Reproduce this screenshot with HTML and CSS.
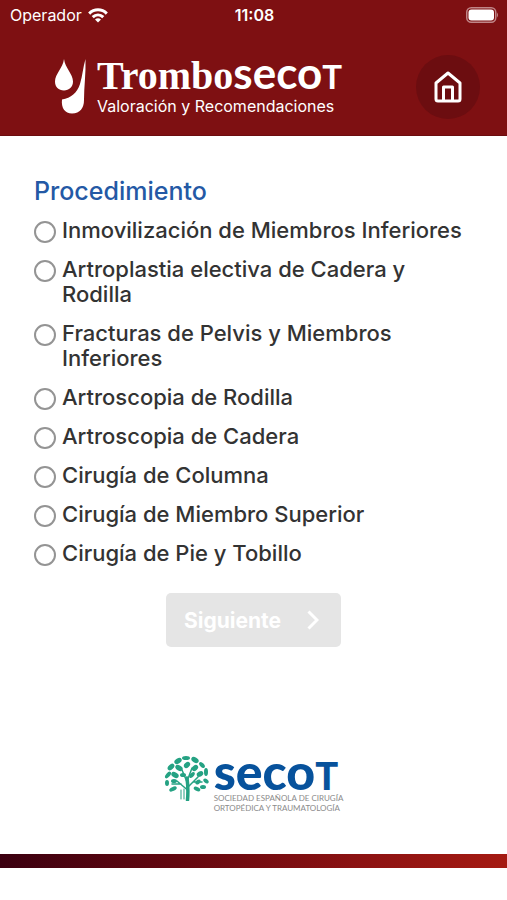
FILE: index.html
```
<!DOCTYPE html>
<html lang="es">
<head>
  <meta charset="UTF-8">
  <meta name="viewport" content="width=device-width, initial-scale=1.0">
  <title>TromboSecot</title>
  <link rel="stylesheet" href="styles.css">
</head>
<body>

<header>
  <div class="status-bar">
    <div class="carrier">
      <span>Operador</span>
      <svg width="20" height="15" viewBox="0 0 20 15" fill="none" stroke="#fff" stroke-width="3">
        <path d="M1.2 5.6C6.2.6 13.8.6 18.8 5.6"/>
        <path d="M4.7 9.2C7.8 6.2 12.2 6.2 15.3 9.2"/>
        <path d="M10 14.6 7 11.6Q10 9 13 11.6Z" fill="#fff" stroke="none"/>
      </svg>
    </div>
    <span class="clock">11:08</span>
    <svg class="battery" width="33" height="16" viewBox="0 0 33 16">
      <rect x=".75" y=".75" width="29" height="14.5" rx="4.5" fill="none" stroke="#c08587" stroke-width="1.5"/>
      <rect x="2.5" y="2.5" width="25.5" height="11" rx="3" fill="#fff"/>
      <path d="M31 5.5Q33 8 31 10.5Z" fill="#c08587"/>
    </svg>
  </div>

  <div class="header-content">
    <div class="brand">
      <svg width="32" height="56" viewBox="0 0 32 56" fill="#fff">
        <path d="M9 0C10 9 18 15 18 22.500C18 28 14 31.500 9 31.500C3.500 31.500 0 28 0 22.500C0 15 8 9 9 0Z"/>
        <path d="M30.500 0C28 8 27.500 17 25 25C22 34 16 39 7 40.500C6 49 10 54.500 17 54.500C25 54.500 29 49 29 41C29 28 31 14 30.500 0Z"/>
      </svg>
      <div>
        <h1><span class="trombo">Trombo</span><span class="wordmark">seco<span>T</span></span></h1>
        <p>Valoración y Recomendaciones</p>
      </div>
    </div>
    <a class="home" href="#" aria-label="Inicio">
      <svg width="28" height="32" viewBox="0 0 28 32" fill="none" stroke="#fff" stroke-width="3" stroke-linejoin="round">
        <path d="M2 12 14 2 26 12V28Q26 30 24 30H4Q2 30 2 28Z"/>
        <path d="M9.500 30V16H18.500V30"/>
      </svg>
    </a>
  </div>
</header>

<main>
  <form id="procedure-form">
    <fieldset>
      <legend>Procedimiento</legend>
      <label><input type="radio" name="procedimiento" value="1"><span>Inmovilización de Miembros Inferiores</span></label>
      <label><input type="radio" name="procedimiento" value="2"><span>Artroplastia electiva de Cadera y Rodilla</span></label>
      <label><input type="radio" name="procedimiento" value="3"><span>Fracturas de Pelvis y Miembros Inferiores</span></label>
      <label><input type="radio" name="procedimiento" value="4"><span>Artroscopia de Rodilla</span></label>
      <label><input type="radio" name="procedimiento" value="5"><span>Artroscopia de Cadera</span></label>
      <label><input type="radio" name="procedimiento" value="6"><span>Cirugía de Columna</span></label>
      <label><input type="radio" name="procedimiento" value="7"><span>Cirugía de Miembro Superior</span></label>
      <label><input type="radio" name="procedimiento" value="8"><span>Cirugía de Pie y Tobillo</span></label>
    </fieldset>
    <button type="submit" disabled>
      Siguiente
      <svg width="12" height="20" viewBox="0 0 12 20" fill="none" stroke="#fff" stroke-width="3"><path d="M1.500 1.500 10 10 1.500 18.500"/></svg>
    </button>
  </form>
</main>

<footer>
  <div class="secot">
    <svg width="46" height="46" viewBox="0 0 46 46" fill="#25a283">
      <g fill="none" stroke="#25a283" stroke-linecap="round">
        <path d="M23.500 45Q24.500 34 23 23" stroke-width="3.500"/>
        <path d="M23.500 35 13 26M24 32 34 22M23 27 18 15M23.500 25 28 13M17 29H8M29 27H38" stroke-width="1.500"/>
        <path d="M17 35V44M20 34V44" stroke-width="1"/>
      </g>
      <g>
        <ellipse cx="22" cy="3" rx="4" ry="2"/><ellipse cx="14" cy="6" rx="4" ry="2.500" transform="rotate(-30 14 6)"/>
        <ellipse cx="31" cy="5" rx="4" ry="2.500" transform="rotate(30 31 5)"/><ellipse cx="38" cy="10" rx="3.500" ry="2" transform="rotate(45 38 10)"/>
        <ellipse cx="7" cy="12" rx="4" ry="2.500" transform="rotate(-45 7 12)"/><ellipse cx="15" cy="13" rx="4" ry="2.500" transform="rotate(30 15 13)"/>
        <ellipse cx="23" cy="10" rx="3.500" ry="2.500" transform="rotate(-40 23 10)"/><ellipse cx="31" cy="13" rx="3.500" ry="2.500" transform="rotate(-40 31 13)"/>
        <ellipse cx="42" cy="17" rx="2" ry="4"/><ellipse cx="4" cy="20" rx="4" ry="2" transform="rotate(-50 4 20)"/>
        <ellipse cx="11" cy="20" rx="4" ry="2.500" transform="rotate(30 11 20)"/><ellipse cx="19" cy="20" rx="3" ry="2"/>
        <ellipse cx="28" cy="20" rx="3.500" ry="2" transform="rotate(-50 28 20)"/><ellipse cx="36" cy="19" rx="3.500" ry="2.500" transform="rotate(-30 36 19)"/>
        <ellipse cx="42" cy="26" rx="3" ry="2" transform="rotate(40 42 26)"/><ellipse cx="3" cy="28" rx="2" ry="3"/>
        <ellipse cx="10" cy="26" rx="3" ry="2"/><ellipse cx="34" cy="27" rx="3" ry="2" transform="rotate(-35 34 27)"/>
        <ellipse cx="9" cy="34" rx="4" ry="2" transform="rotate(-25 9 34)"/><ellipse cx="39" cy="32" rx="3" ry="2"/>
        <ellipse cx="33" cy="34" rx="3.500" ry="2" transform="rotate(25 33 34)"/>
      </g>
    </svg>
    <div>
      <div class="wordmark">seco<span>T</span></div>
      <p>SOCIEDAD ESPAÑOLA DE CIRUGÍA<br>ORTOPÉDICA Y TRAUMATOLOGÍA</p>
    </div>
  </div>
  <div class="stripe"></div>
</footer>

</body>
</html>
```
FILE: styles.css
```
* {
  box-sizing: border-box;
}
body {
  font-family: Inter, 'Liberation Sans', sans-serif;
  background-color: #fff;
  color: #333;
  display: flex;
  flex-direction: column;
  min-height: 100vh;
  margin: 0;
}
h1, p {
  margin: 0;
}
svg {
  display: block;
  flex-shrink: 0;
}
header {
  background-color: #7e1012;
  border-bottom: 1px solid #6c0d0f;
  color: #fff;
}
.status-bar {
  display: grid;
  grid-template-columns: 1fr auto 1fr;
  align-items: center;
  height: 30px;
  padding: 0 8px 0 10px;
  font-size: 16px;
}
.carrier {
  display: flex;
  align-items: center;
  gap: 6px;
}
.clock {
  font-weight: 600;
}
.battery {
  justify-self: end;
}
.header-content {
  display: flex;
  justify-content: space-between;
  align-items: center;
  padding: 25px 27px 16px 55px;
}
.brand {
  display: flex;
  align-items: center;
  gap: 10px;
}
h1 {
  display: flex;
  align-items: baseline;
  height: 38px;
  line-height: 28px;
  font-weight: bold;
}
.trombo {
  font-family: 'Liberation Serif', serif;
  font-size: 40px;
}
.wordmark {
  font-family: Lato, sans-serif;
  font-weight: bold;
  font-size: 44px;
}
.wordmark span {
  font-size: 33px;
}
.brand p {
  font-size: 16px;
  line-height: 20px;
}
.home {
  display: flex;
  justify-content: center;
  align-items: center;
  width: 64px;
  height: 64px;
  border-radius: 50%;
  background-color: #6c0d10;
}
main {
  flex: 1;
  padding: 40px 34px;
}
form {
  display: flex;
  flex-direction: column;
  align-items: center;
  gap: 27px;
}
fieldset {
  display: flex;
  flex-direction: column;
  gap: 14px;
  width: 100%;
  margin: 0;
  padding: 0;
  border: none;
}
legend {
  padding: 0;
  margin-bottom: 12px;
  color: #2459a5;
  font-size: 25px;
  font-weight: 500;
  line-height: 30px;
}
label {
  display: flex;
  align-items: flex-start;
  gap: 6px;
  font-size: 22px;
  font-weight: 500;
  line-height: 25px;
}
input {
  appearance: none;
  flex-shrink: 0;
  width: 22px;
  height: 22px;
  margin: 3px 0 0;
  border: 2px solid #949494;
  border-radius: 50%;
}
input:checked {
  border: 7px solid #2459a5;
}
button {
  display: flex;
  align-items: center;
  gap: 26px;
  height: 54px;
  padding: 0 22px 0 18px;
  border: none;
  border-radius: 5px;
  background-color: #e5e5e5;
  color: #fff;
  font-family: inherit;
  font-size: 21px;
  font-weight: 700;
}
footer {
  padding-bottom: 32px;
}
.secot {
  display: flex;
  justify-content: center;
  gap: 4px;
  margin-bottom: 41px;
}
.secot .wordmark {
  height: 38px;
  line-height: 32px;
  color: #07529c;
  font-size: 50px;
  font-weight: 900;
}
.secot .wordmark span {
  font-size: 38px;
}
.secot p {
  color: #8b8b8b;
  font-family: Lato, sans-serif;
  font-size: 8px;
  line-height: 10px;
}
.stripe {
  height: 14px;
  background: linear-gradient(to right, #3b0010, #63070f 35%, #8b1212 70%, #a51a12);
}
```
